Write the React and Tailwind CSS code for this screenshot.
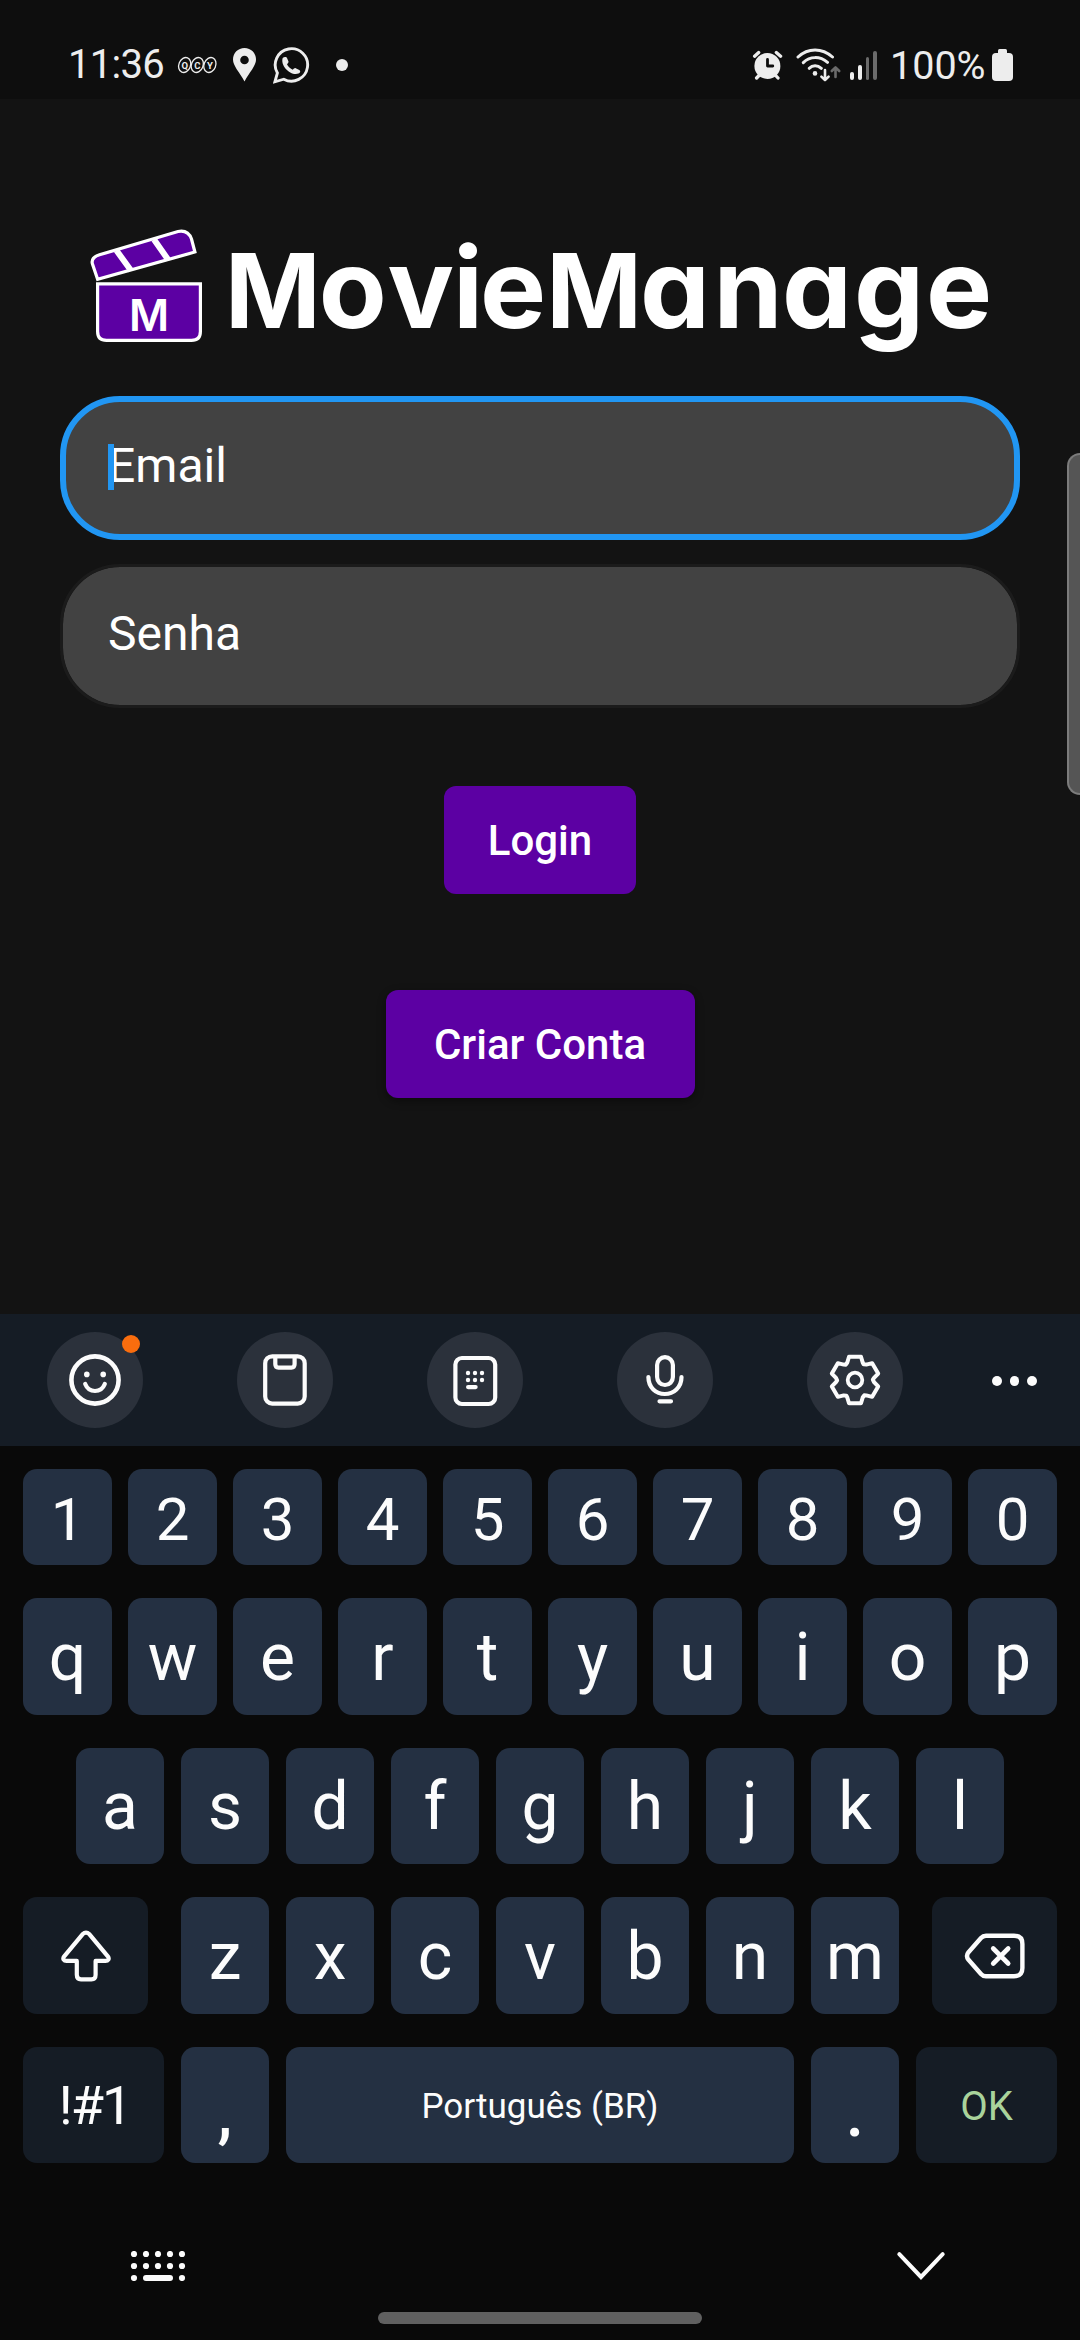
import React from "react";

function Logo() {
  return (
    <svg className="block h-[160px] w-[1080px]" viewBox="0 212 1080 160" fill="none">
      <path
        d="M97.6 279.3 92.3 263.5Q91 257.500 99.500 254.800L178 231.500Q188 229.500 191.500 239L194.900 252Z"
        fill="#5c00a3" stroke="#fff" strokeWidth="3.2"
      />
      <path d="M116.500 250.500 131 270.500M154 239.500 168 259.500" stroke="#fff" strokeWidth="6" />
      <path
        d="M97.600 283.900H200.400V331.500Q200.400 340.400 191.500 340.400H106.500Q97.600 340.400 97.600 331.500Z"
        fill="#5c00a3" stroke="#fff" strokeWidth="3.200"
      />
      <text
        x="149" y="330.700" textAnchor="middle" fill="#fff"
        className="font-['Inter'] text-[43.500px] font-semibold"
      >
        M
      </text>
      <text y="327.700" fill="#fff" className="font-['Inter'] text-[111px] font-[670] [font-feature-settings:'cv11']">
        <tspan x="225" className="text-[102.700px]">M</tspan>
        <tspan x="318.700 387.500 453 480">ovie</tspan>
        <tspan x="546.300" className="text-[102.700px]">M</tspan>
        <tspan x="640 713.500 782 854 926">anage</tspan>
      </text>
    </svg>
  );
}

function StatusBar() {
  return (
    <header className="flex h-[99px] items-start justify-between bg-[#0e0e0e] pt-[45px] pr-[67px] pl-[68px] text-[40px] leading-[40px] text-[#ededed]">
      <div className="flex h-[40px] items-center">
        <span className="w-[108px] tracking-[-0.7px]">11:36</span>
        <svg className="h-[20px] w-[42px]" viewBox="176 54 42 20" fill="none">
          <g stroke="#ededed" strokeWidth="1.300">
            <ellipse cx="184.700" cy="64" rx="5.800" ry="7.700" transform="rotate(22 184.700 64)" />
            <ellipse cx="197.300" cy="64" rx="5.800" ry="7.700" transform="rotate(22 197.300 64)" />
            <ellipse cx="209.900" cy="64" rx="5.800" ry="7.700" transform="rotate(22 209.900 64)" />
          </g>
          <text x="184.700 197.300 209.900" y="67.500" textAnchor="middle" fill="#ededed" className="text-[9.500px] font-bold">QCY</text>
        </svg>
        <svg className="ml-[15px] h-[34px] w-[23px]" viewBox="0 0 23 34">
          <path
            fillRule="evenodd" fill="#ededed"
            d="M11.500 0C5 0 0 5 0 11.500 0 18 6.500 24 11.500 33.500 16.500 24 23 18 23 11.500 23 5 18 0 11.500 0ZM11.500 7.700A4.300 4.300 0 1 1 11.500 16.300 4.300 4.300 0 0 1 11.500 7.700Z"
          />
        </svg>
        <svg className="ml-[17px] h-[37px] w-[37px]" viewBox="0 0 37 37" fill="none">
          <path d="M4.400 26A16.200 16.200 0 1 1 10.800 32.200L1.900 34.800Z" stroke="#ededed" strokeWidth="2.900" />
          <path
            d="M9.700 11C11 9.600 13.500 9.600 14 11L15.500 14.500C15.800 15.700 14.500 16.500 14 17.300 15 19.500 17.500 21.800 19.800 22.700 20.800 22 21.500 20.800 22.700 21.200L26.300 23C28 24 27 26 25.500 26.600 18 29.500 7 19 9.700 11Z"
            fill="#ededed"
          />
        </svg>
        <span className="ml-[26px] size-[12px] rounded-full bg-[#ededed]" />
      </div>
      <div className="flex h-[40px] items-center">
        <svg className="h-[30px] w-[31px]" viewBox="0 0 31 30" fill="none">
          <path d="M2.600 6.200 6.700 2.500M24.300 2.500 28.600 6.200M4.600 28 8 24.500M26 28 22.800 24.500" stroke="#ededed" strokeWidth="3.300" strokeLinecap="round" />
          <circle cx="15.400" cy="16" r="13" fill="#ededed" />
          <path d="M15.500 9.500V16H20.800" stroke="#0e0e0e" strokeWidth="2.800" strokeLinecap="round" strokeLinejoin="round" />
        </svg>
        <svg className="ml-[13px] h-[36px] w-[46px]" viewBox="0 0 46 36" fill="none" strokeLinecap="round" strokeLinejoin="round">
          <path d="M2 10C12 .600 26 .600 36.500 10M7.300 15.600C14 9 24 9 31.500 15.400M13.300 21.300C16.500 17.800 21.500 17.800 25.300 21.300" stroke="#ededed" strokeWidth="3" />
          <circle cx="19" cy="26.400" r="2.300" fill="#ededed" />
          <path d="M29 23V33M25.400 29.600 29 33.200 32.600 29.600" stroke="#ededed" strokeWidth="2.600" />
          <path d="M39.500 30V20.500M35.800 24 39.500 20.300 43.200 24" stroke="#6b6b6b" strokeWidth="2.600" />
        </svg>
        <div className="ml-[8px] flex h-[29px] items-end gap-[4px]">
          <i className="h-[8px] w-[3.700px] rounded-full bg-[#ededed]" />
          <i className="h-[15px] w-[3.700px] rounded-full bg-[#ededed]" />
          <i className="h-[23px] w-[3.700px] rounded-full bg-[#6b6b6b]" />
          <i className="h-[29px] w-[3.700px] rounded-full bg-[#6b6b6b]" />
        </div>
        <span className="ml-[13px] w-[98px] whitespace-nowrap pt-[1px] text-[39.500px]">100%</span>
        <svg className="ml-[4px] h-[32px] w-[21px]" viewBox="0 0 21 32" fill="#ededed">
          <rect x="6" width="9" height="8" rx="1.500" />
          <rect y="4" width="21" height="28" rx="4" />
        </svg>
      </div>
    </header>
  );
}

const TOOTH = [[-9.200, -15.300], [-7.700, -17.500], [-6, -23.300], [6, -23.300], [7.700, -17.500]];
const gearPoints = [0, 1, 2, 3, 4, 5].flatMap((k) => {
  const a = (k * Math.PI) / 3;
  return TOOTH.map(([x, y]) =>
    [x * Math.cos(a) - y * Math.sin(a), x * Math.sin(a) + y * Math.cos(a)].map((n) => n.toFixed(2)).join(","),
  );
}).join(" ");

const TOOLS = [
  <>
    <circle r="23.600" strokeWidth="4.600" />
    <circle cx="-8.200" cy="-5.600" r="2.800" fill="#fcfcfc" stroke="none" />
    <circle cx="8.200" cy="-5.600" r="2.800" fill="#fcfcfc" stroke="none" />
    <path d="M-9.800 4C-7.800 9 -4 11 0 11S7.800 9 9.800 4" />
  </>,
  <>
    <rect x="-19.800" y="-23.700" width="39.500" height="47.300" rx="7" />
    <path d="M-9.700-23V-16Q-9.700-12.400-6.500-12.400H6.400Q9.600-12.400 9.600-16V-23" />
  </>,
  <>
    <rect x="-19.600" y="-22" width="39.800" height="46" rx="6.500" />
    <g fill="#fcfcfc" stroke="none">
      {[-7, 0, 7].map((x) => [-7, 0].map((y) => <circle key={`${x} ${y}`} cx={x} cy={y} r="2.200" />))}
      <rect x="-9" y="4.900" width="11.700" height="4.300" rx="2.100" />
    </g>
  </>,
  <>
    <rect x="-7.900" y="-22.800" width="15.800" height="27.800" rx="7.900" />
    <path d="M-16.600-3C-16.600 7.500-9 14-.200 14S16.500 7.500 16.500-3M-5.500 21.300H6" />
  </>,
  <>
    <polygon points={gearPoints} strokeWidth="4" />
    <circle r="7.300" strokeWidth="3.800" />
  </>,
];

function Toolbar() {
  return (
    <div className="flex h-[132px] items-center bg-[#151c25] pl-[47px]">
      <div className="flex gap-[94px]">
        {TOOLS.map((icon, i) => (
          <div key={i} className="relative flex size-[96px] items-center justify-center rounded-full bg-[#2b313b]">
            <svg
              className="size-[54px]" viewBox="-27 -27 54 54" fill="none" stroke="#fcfcfc"
              strokeWidth="4.200" strokeLinecap="round" strokeLinejoin="round"
            >
              {icon}
            </svg>
            {i === 0 && <span className="absolute top-[3px] right-[3px] size-[18px] rounded-full bg-[#f96d0e]" />}
          </div>
        ))}
      </div>
      <div className="mt-[2px] ml-[89px] flex gap-[8px]">
        <i className="size-[9.600px] rounded-full bg-[#fcfcfc]" />
        <i className="size-[9.600px] rounded-full bg-[#fcfcfc]" />
        <i className="size-[9.600px] rounded-full bg-[#fcfcfc]" />
      </div>
    </div>
  );
}

function Key({ children, className = "w-[88px] bg-[#243042] pt-[2px] text-[66px]" }) {
  return (
    <div className={`flex h-full shrink-0 items-center justify-center rounded-[14px] leading-none ${className}`}>
      {children}
    </div>
  );
}

function Keyboard() {
  return (
    <section className="h-[1026px] bg-[#090909] text-[#fcfcfc]">
      <Toolbar />
      <div className="mt-[23px] flex h-[96px] gap-[16px] px-[23px]">
        {[..."1234567890"].map((c) => (
          <Key key={c} className="w-[89px] bg-[#243042] pt-[5px] text-[60px]">{c}</Key>
        ))}
      </div>
      <div className="mt-[33px] flex h-[117px] gap-[16px] px-[23px]">
        {[..."qwertyuiop"].map((c) => (
          <Key key={c} className="w-[89px] bg-[#243042] pt-[2px] text-[66px]">{c}</Key>
        ))}
      </div>
      <div className="mt-[33px] flex h-[116px] gap-[17px] px-[76px]">
        {[..."asdfghjkl"].map((c) => <Key key={c}>{c}</Key>)}
      </div>
      <div className="mt-[33px] flex h-[117px] justify-between px-[23px]">
        <Key className="w-[125px] bg-[#151c25]">
          <svg className="size-[54px]" viewBox="-27 -27 54 54" fill="none" stroke="#fcfcfc" strokeWidth="4.200" strokeLinejoin="round">
            <path d="M-3.500-21.700-21.800.300C-23.800 3-22 4.900-19.500 4.900H-9.200V18.800Q-9.200 23.300-5 23.300H5.400Q9.600 23.300 9.600 18.800V4.900H19.500C22 4.900 23.800 3 21.800.300L3.500-21.700Q0-25-3.500-21.700Z" />
          </svg>
        </Key>
        <div className="flex gap-[16.300px]">
          {[..."zxcvbnm"].map((c) => <Key key={c} className="w-[88.700px] bg-[#243042] pt-[2px] text-[66px]">{c}</Key>)}
        </div>
        <Key className="w-[125px] bg-[#151c25]">
          <svg className="h-[50px] w-[64px]" viewBox="-32 -25 64 50" fill="none" stroke="#fcfcfc" strokeWidth="4.400" strokeLinecap="round" strokeLinejoin="round">
            <path d="M-9-20.300H19Q27.400-20.300 27.400-12V12Q27.400 20.300 19 20.300H-9Q-12 20.300-14 18L-26.500 3.800Q-29.500 0-26.500-3.800L-14-18Q-12-20.300-9-20.300Z" />
            <path d="M-1.800-7.500 13.200 7.500M13.200-7.500-1.800 7.500" strokeWidth="4.600" />
          </svg>
        </Key>
      </div>
      <div className="mt-[33px] flex h-[116px] gap-[17px] px-[23px]">
        <Key className="w-[141px] bg-[#151c25] pt-[2px] pl-[2px] text-[54px] tracking-[-2px]">!#1</Key>
        <Key className="w-[88px] bg-[#243042] pt-[17px] text-[66px] font-medium">,</Key>
        <Key className="w-[508px] bg-[#243042] pt-[3px] text-[35px]">Português (BR)</Key>
        <Key className="w-[88px] bg-[#243042] pt-[17px] text-[66px] font-medium">.</Key>
        <Key className="w-[141px] bg-[#151c25] pt-[3px] text-[40px] text-[#a9d39b]">OK</Key>
      </div>
      <div className="mt-[88px] flex h-[30px] justify-between pr-[134px] pl-[130px]">
        <svg className="h-[30px] w-[56px]" viewBox="0 0 56 30" fill="#fcfcfc">
          {[0, 1, 2, 3, 4].map((c) => [0, 1].map((r) => <circle key={`${c} ${r}`} cx={4 + c * 12} cy={3 + r * 12} r="3.100" />))}
          <circle cx="4" cy="27" r="3.100" />
          <rect x="13" y="24" width="30" height="6" rx="3" />
          <circle cx="52" cy="27" r="3.100" />
        </svg>
        <svg className="h-[30px] w-[50px]" viewBox="0 0 50 30" fill="none">
          <path d="M3.300 3.200 25 26 46.700 3.200" stroke="#fcfcfc" strokeWidth="4" strokeLinecap="round" />
        </svg>
      </div>
      <div className="mx-auto mt-[31px] h-[12px] w-[324px] rounded-full bg-[#606060]" />
    </section>
  );
}

export default function App() {
  return (
    <div className="relative h-[2340px] w-[1080px] overflow-hidden bg-[#131313] font-['Roboto',sans-serif]">
      <StatusBar />
      <main className="flex h-[1215px] flex-col items-center pt-[113px]">
        <Logo />
        <div className="mt-[24px] flex h-[144px] w-[960px] items-center rounded-[60px] border-[6px] border-[#2196f3] bg-[#424242] pb-[5px] pl-[42px] text-[48px] leading-none text-white">
          <span className="relative">
            Email
            <i className="absolute top-[2px] left-0 h-[46px] w-[6px] bg-[#2196f3]" />
          </span>
        </div>
        <div className="mt-[24px] flex h-[144px] w-[960px] items-center rounded-[60px] border-[3px] border-[#1b1b1b] bg-[#424242] bg-clip-padding pb-[5px] pl-[45px] text-[48px] leading-none text-white">
          Senha
        </div>
        <button className="mt-[78px] h-[108px] w-[192px] rounded-[12px] bg-[#5c00a3] pt-[2px] text-[42px] leading-none font-medium text-white">
          Login
        </button>
        <button className="mt-[96px] h-[108px] w-[309px] rounded-[12px] bg-[#5c00a3] pt-[2px] text-[42px] leading-none font-medium text-white shadow-[0_3px_8px_rgba(0,0,0,0.4)]">
          Criar Conta
        </button>
      </main>
      <Keyboard />
      <div className="absolute top-[453px] right-0 h-[342px] w-[13px] rounded-l-[13px] border-y-2 border-l-2 border-[#7c7c7c] bg-[#555555]" />
    </div>
  );
}
